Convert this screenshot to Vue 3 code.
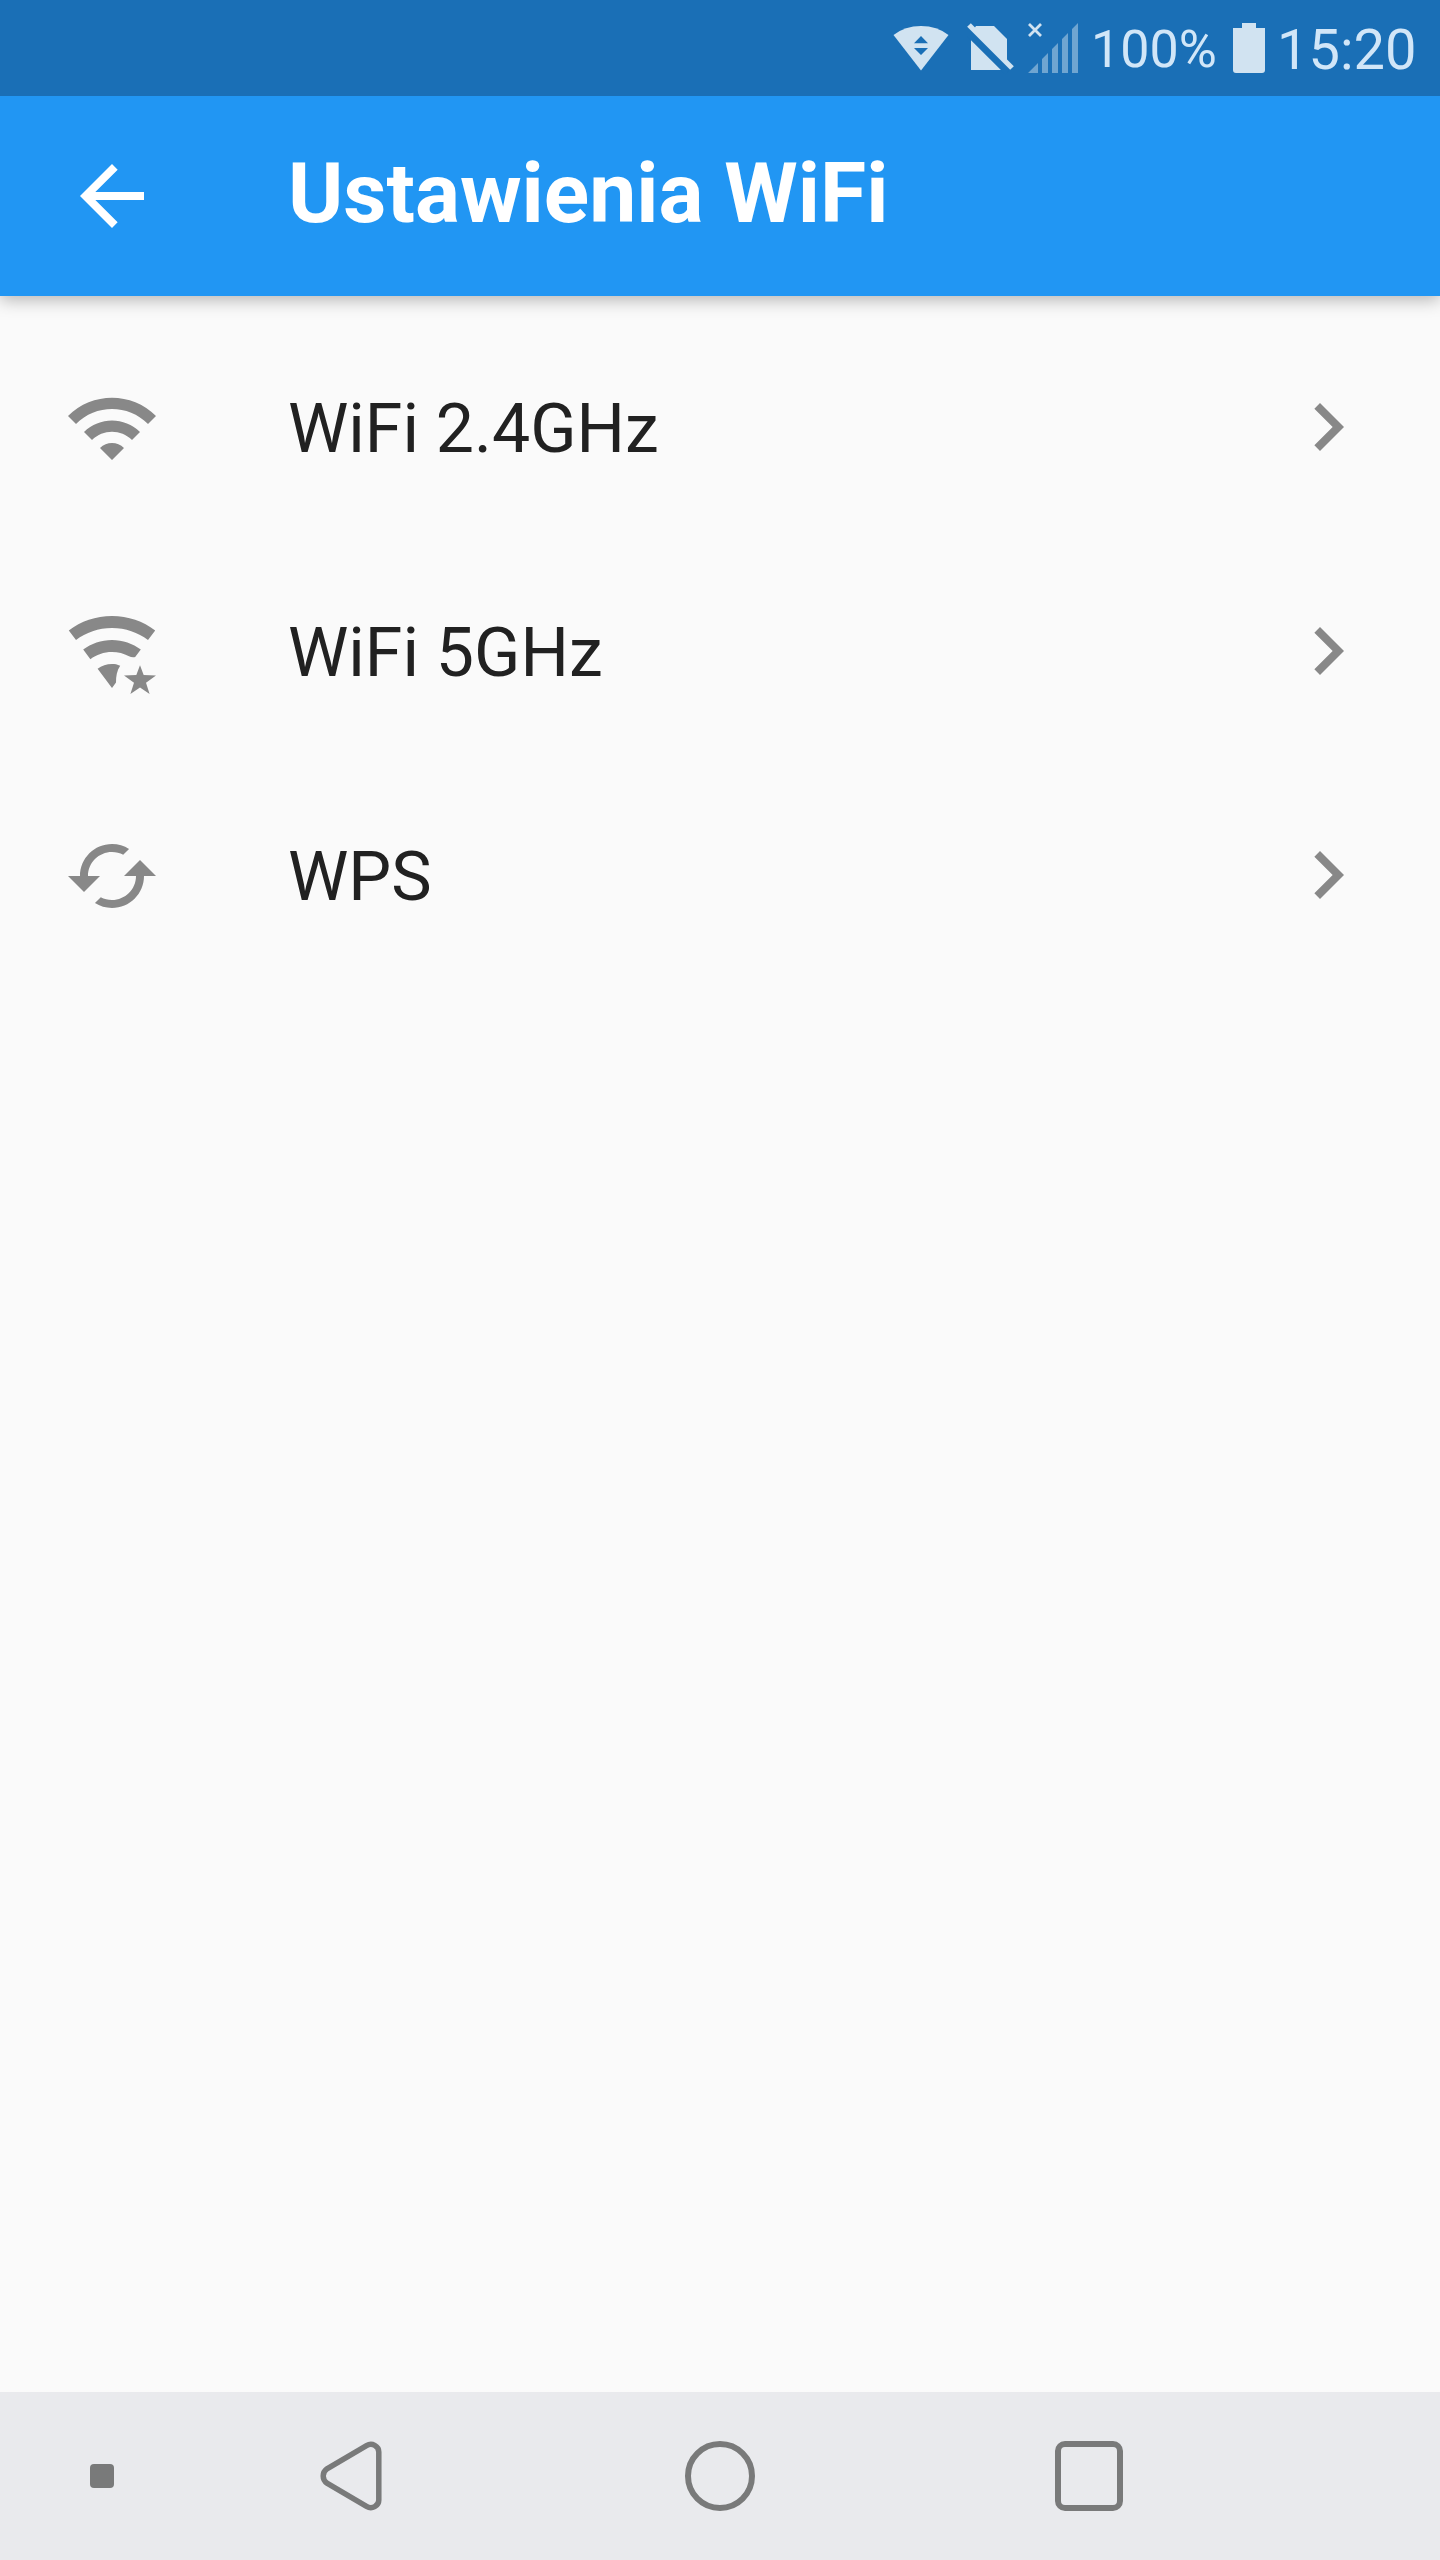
<script setup>
const items = [
  {
    label: 'WiFi 2.4GHz',
    paths: [
      'M1 9l2 2c4.97-4.97 13.03-4.97 18 0l2-2C16.93 2.93 7.08 2.93 1 9zm8 8l3 3 3-3c-1.65-1.66-4.34-1.66-6 0zm-4-4l2 2c2.76-2.76 7.24-2.76 10 0l2-2C15.14 9.14 8.87 9.14 5 13z',
    ],
  },
  {
    label: 'WiFi 5GHz',
    paths: [
      'M12 3C7.95 3 4.21 4.34 1.2 6.6L3 9c2.5-1.88 5.62-3 9-3s6.5 1.12 9 3l1.8-2.4C19.79 4.34 16.05 3 12 3z',
      'M12 9c-2.7 0-5.19.89-7.2 2.4l1.8 2.4C8.1 12.67 9.97 12 12 12c1.55 0 2.95.4 4.25 1.05.5.28 1.05.3 1.55.2L19.2 11.4C17.19 9.89 14.7 9 12 9z',
      'M12 15c-1.35 0-2.6.45-3.6 1.2L12 21l1-1.4c0-1.5.2-2.9 1.05-4.15C13.35 15.1 12.7 15 12 15z',
      'M19 15.3l.92 2.48 3.08.1-2.5 1.78.9 2.84-2.4-1.65-2.4 1.65.9-2.84L15 17.88l3.08-.1z',
    ],
  },
  {
    label: 'WPS',
    paths: [
      'M19 8l-4 4h3c0 3.31-2.69 6-6 6-1.01 0-1.97-.25-2.8-.7l-1.46 1.46C8.97 19.54 10.43 20 12 20c4.42 0 8-3.58 8-8h3l-4-4zM6 12c0-3.31 2.69-6 6-6 1.01 0 1.97.25 2.8.7l1.46-1.46C15.03 4.46 13.57 4 12 4c-4.42 0-8 3.58-8 8H1l4 4 4-4H6z',
    ],
  },
]
</script>

<template>
  <div class="screen">
    <div class="status">
      <svg class="s-wifi" width="56" height="96" viewBox="893 0 56 96">
        <path d="M893.5 35Q905 26 921 26Q937 26 948.5 35L921 70.5z" fill="#d1e3f1" />
        <path d="M921 36l7 7.2h-14zM914 48h14l-7 7z" fill="#1a6fb6" />
      </svg>
      <svg class="s-sim" width="48" height="96" viewBox="967 0 48 96">
        <path d="M976 26h18l13 13v31h-36V33z" fill="#d1e3f1" />
        <path d="M966 29.5L1008 71.5" stroke="#1a6fb6" stroke-width="8" />
        <path d="M969 25L1012 68" stroke="#d1e3f1" stroke-width="5.2" />
      </svg>
      <svg class="s-signal" width="52" height="96" viewBox="1027 0 52 96">
        <path d="M1028 73l10-10v10zM1042 73V59l6-6v20zM1052 73V49l6-6v30zM1062 73V39l6-6v40zM1072 73V29l6-6v50z" fill="#6fa5d1" />
        <path d="M1029 24l12 12M1041 24l-12 12" stroke="#d1e3f1" stroke-width="2.8" />
      </svg>
      <span class="percent">100%</span>
      <svg class="s-battery" width="32" height="96" viewBox="0 0 32 96">
        <path d="M9 23h14v5h9v42q0 3-3 3H3q-3 0-3-3V28h9z" fill="#d1e3f1" />
      </svg>
      <span class="time">15:20</span>
    </div>

    <header class="bar">
      <svg width="96" height="96" viewBox="0 0 24 24" fill="#fff">
        <path d="M20 11H7.83l5.59-5.59L12 4l-8 8 8 8 1.41-1.41L7.83 13H20v-2z" />
      </svg>
      <h1>Ustawienia WiFi</h1>
    </header>

    <main class="list">
      <div v-for="item in items" :key="item.label" class="row">
        <svg width="96" height="96" viewBox="0 0 24 24" fill="#888">
          <path v-for="d in item.paths" :key="d" :d="d" />
        </svg>
        <span class="label">{{ item.label }}</span>
        <svg class="chevron" width="96" height="96" viewBox="0 0 24 24" fill="#888">
          <path d="M10 6L8.59 7.41 13.17 12l-4.58 4.59L10 18l6-6z" />
        </svg>
      </div>
    </main>

    <nav class="nav">
      <span class="dot"></span>
      <svg class="back" width="64" height="72" viewBox="0 0 64 72" fill="none" stroke="#797a7a" stroke-width="5.5">
        <path d="M46.5 5.6L7 28.8Q3.2 31.5 3.2 36Q3.2 40.5 7 43.2L46.5 66.4C52 69.7 58.8 66 58.8 60V12C58.8 6 52 2.3 46.5 5.6z" />
      </svg>
      <span class="home"></span>
      <span class="recent"></span>
    </nav>
  </div>
</template>

<style>
body {
  margin: 0;
}
</style>

<style scoped>
.screen {
  width: 1440px;
  height: 2560px;
  display: flex;
  flex-direction: column;
  background: #fafafa;
  font-family: Roboto, sans-serif;
  overflow: hidden;
}
svg {
  display: block;
  flex: none;
}
.status {
  position: relative;
  z-index: 1;
  flex: none;
  height: 96px;
  display: flex;
  background: #1a6fb6;
  color: #d1e6f8;
  padding-left: 893px;
  box-sizing: border-box;
  white-space: nowrap;
}
.s-sim {
  margin-left: 18px;
}
.s-signal {
  margin-left: 12px;
}
.percent {
  width: 142px;
  margin-left: 12px;
  font-size: 52px;
  line-height: 99px;
}
.time {
  margin-left: 12px;
  font-size: 56px;
  line-height: 100px;
}
.bar {
  flex: none;
  height: 200px;
  display: flex;
  align-items: center;
  padding-left: 64px;
  background: #2196f3;
  box-shadow: 0 4px 16px rgba(0, 0, 0, 0.28);
}
h1 {
  margin: 0 0 0 128px;
  font-size: 84px;
  font-weight: 700;
  line-height: 200px;
  height: 204px;
  color: #fff;
  white-space: nowrap;
}
.list {
  flex: 1;
  padding-top: 20px;
}
.row {
  height: 224px;
  display: flex;
  align-items: center;
  padding: 0 64px;
}
.label {
  flex: 1;
  margin-left: 128px;
  padding-top: 2px;
  font-size: 68px;
  line-height: 80px;
  color: #212121;
}
.chevron {
  margin: 0 0 2px;
}
.nav {
  flex: none;
  height: 168px;
  display: flex;
  align-items: center;
  background: #e9eaed;
}
.dot {
  width: 24px;
  height: 24px;
  margin-left: 90px;
  border-radius: 4px;
  background: #797a7a;
}
.back {
  margin-left: 206px;
}
.home,
.recent {
  box-sizing: border-box;
  border: 6px solid #797a7a;
}
.home {
  width: 70px;
  height: 70px;
  margin-left: 301px;
  border-radius: 50%;
}
.recent {
  width: 68px;
  height: 70px;
  margin-left: 300px;
  border-radius: 10px;
}
</style>
